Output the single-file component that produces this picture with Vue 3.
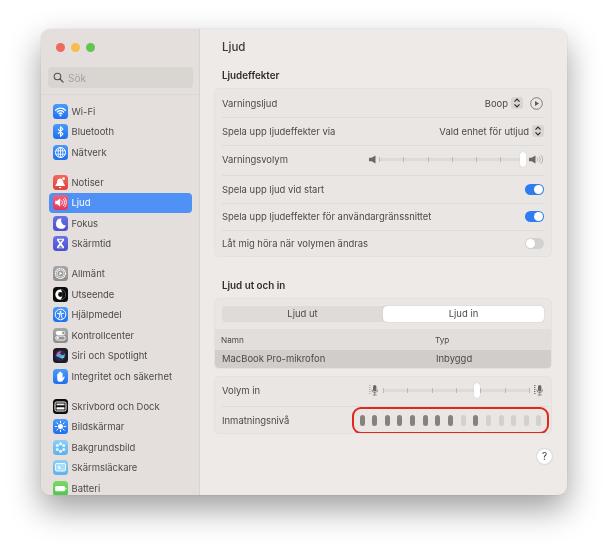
<script setup>
const icons = {
  wifi: '<path d="M2.600 6.200a7 7 0 0 1 9.800 0M4.400 8a4.500 4.500 0 0 1 6.200 0M6 9.700a2.200 2.200 0 0 1 3 0" fill="none" stroke="#fff" stroke-width="1.300" stroke-linecap="round"/><circle cx="7.500" cy="11.400" r="1" fill="#fff"/>',
  bt: '<path d="M4.900 5.200l5 4.700-2.400 2.400V2.700l2.400 2.400-5 4.700" fill="none" stroke="#fff" stroke-width="1.100" stroke-linejoin="round"/>',
  globe: '<circle cx="7.500" cy="7.500" r="5" fill="none" stroke="#fff" stroke-width="1"/><ellipse cx="7.500" cy="7.500" rx="2.300" ry="5" fill="none" stroke="#fff" stroke-width=".8"/><path d="M2.700 5.800h9.600M2.700 9.200h9.600M7.500 2.500v10" stroke="#fff" stroke-width=".8"/>',
  bell: '<path d="M7.200 3.400c-2.100 0-3.100 1.500-3.100 3.300 0 1.800-1 2.700-1.600 3.400v.8h9.400v-.8c-.6-.7-1.600-1.600-1.600-3.400 0-1.800-1-3.300-3.100-3.300z" fill="#fff"/><path d="M6 12a1.200 1.200 0 0 0 2.400 0z" fill="#fff"/><circle cx="10.600" cy="3.700" r="1.900" fill="#e0423c"/><circle cx="10.600" cy="3.700" r="1.400" fill="#fff"/>',
  sound: '<path d="M2.200 5.800h2l3-2.600v8.600l-3-2.600h-2z" fill="#fff"/><path d="M8.800 5.600a2.600 2.600 0 0 1 0 3.800M10.300 4.200a4.600 4.600 0 0 1 0 6.600M11.700 3a6.400 6.400 0 0 1 0 9" fill="none" stroke="#fff" stroke-width=".9" stroke-linecap="round"/>',
  moon: '<path d="M8.400 2.600A5.100 5.100 0 1 0 12.900 9.400 5 5 0 0 1 8.400 2.600z" fill="#fff"/>',
  hourglass: '<path d="M4 2.700h7v1c0 1.700-2.200 2.700-2.200 3.800s2.200 2.100 2.200 3.800v1H4v-1c0-1.700 2.200-2.700 2.200-3.800S4 5.400 4 3.700z" fill="#fff"/><path d="M5.400 3.800h4.200L7.500 6.300zM5.200 11.800h4.600L7.500 9.400z" fill="#6a72d8"/>',
  gear: '<circle cx="7.500" cy="7.500" r="5" fill="none" stroke="#fff" stroke-width="1.200" stroke-dasharray="1.600 .5"/><circle cx="7.500" cy="7.500" r="3.500" fill="none" stroke="#fff" stroke-width=".7"/><path d="M6.500 5.700l2.800 1.800-2.800 1.800z" fill="#fff"/>',
  look: '<circle cx="7.500" cy="7.500" r="5.200" fill="#fff"/><path d="M7.500 2.300a5.200 5.200 0 0 1 0 10.400c1.500-1.500 1.900-3.300 1.900-5.200S9 3.800 7.500 2.300z" fill="#111"/><circle cx="7.500" cy="7.500" r="2.400" fill="#111"/>',
  access: '<circle cx="7.500" cy="7.500" r="5.300" fill="none" stroke="#fff" stroke-width="1"/><circle cx="7.500" cy="4.900" r="1" fill="#fff"/><path d="M4.500 6.300l2.200.5v2l-1 2.700M10.500 6.300l-2.200.5v2l1 2.700M6.700 6.800h1.600" fill="none" stroke="#fff" stroke-width="1" stroke-linecap="round"/>',
  control: '<rect x="2.700" y="2.900" width="9.600" height="4" rx="2" fill="#fff"/><circle cx="10.300" cy="4.900" r="1.300" fill="#999"/><rect x="2.700" y="8.100" width="9.600" height="4" rx="2" fill="none" stroke="#fff" stroke-width=".9"/><circle cx="4.800" cy="10.100" r="1.100" fill="#fff"/>',
  siri: '<circle cx="7.500" cy="7.500" r="5.500" fill="#2b2c46"/><path d="M3 7.500c1.500-3 3-3.500 4.500-1.600 1.300 1.600 3 1.400 4.500-.5-.2 4.700-2.600 5.700-4.500 4.600C6 9 4.600 9.200 3 7.500z" fill="#5ea5e8"/><path d="M3.600 6c1-2.500 3.400-3.300 5-2.500C7 5 5.800 7.500 3.600 6z" fill="#e0559a"/><path d="M8 9.300c1.300-1 3-1 3.600-.7-.8 1.700-2.500 2.500-3.600.7z" fill="#7fdcc0"/>',
  hand: '<path d="M4.200 8.700V5.300a.7.700 0 0 1 1.300 0v2.300-3.800a.7.700 0 0 1 1.400 0v3.500V3.200a.7.700 0 0 1 1.400 0v4.300-3.300a.7.700 0 0 1 1.300 0v5l.9-1.300c.5-.7 1.500-.1 1.100.6l-1.600 3.100c-.5.800-1.200 1.200-2.300 1.200H7c-1.700 0-2.800-1.100-2.800-2.600z" fill="#fff"/>',
  dock: '<rect x="2" y="3" width="11" height="9" rx="1.500" fill="none" stroke="#fff" stroke-width="1"/><rect x="3.500" y="4.500" width="8" height="1.800" fill="#e8e8e8"/><rect x="3.500" y="8.300" width="8" height="2.300" rx=".5" fill="#fff"/>',
  display: '<circle cx="7.500" cy="7.500" r="2.500" fill="#fff"/><path d="M7.500 2.300v1.600M7.500 11.100v1.600M2.300 7.500h1.600M11.100 7.500h1.600M3.800 3.800l1.100 1.100M10.100 10.100l1.100 1.100M3.800 11.200l1.100-1.100M10.100 4.900l1.100-1.100" stroke="#fff" stroke-width="1" stroke-linecap="round"/>',
  flower: '<g fill="#e8f6ff"><circle cx="7.500" cy="3.800" r="1.500"/><circle cx="7.500" cy="11.200" r="1.500"/><circle cx="4.300" cy="5.600" r="1.500"/><circle cx="10.700" cy="5.600" r="1.500"/><circle cx="4.300" cy="9.400" r="1.500"/><circle cx="10.700" cy="9.400" r="1.500"/></g><circle cx="7.500" cy="7.500" r="1.500" fill="#6dbcf0"/>',
  saver: '<rect x="2.500" y="3.500" width="10" height="7.500" rx="1" fill="#a9dcf7" stroke="#fff" stroke-width=".9"/><path d="M6.800 5.400a1.800 1.800 0 1 0 1.600 2.700 1.700 1.700 0 0 1-1.600-2.700z" fill="#fff"/><circle cx="9.800" cy="5.700" r=".4" fill="#fff"/>',
  battery: '<rect x="2.200" y="5" width="9.800" height="5.200" rx="1.200" fill="#fff"/><rect x="12.400" y="6.500" width="1" height="2.200" rx=".5" fill="#fff"/>'
}

const groups = [
  [
    { label: 'Wi-Fi', icon: 'wifi', tone: 'blue' },
    { label: 'Bluetooth', icon: 'bt', tone: 'blue' },
    { label: 'Nätverk', icon: 'globe', tone: 'blue' }
  ],
  [
    { label: 'Notiser', icon: 'bell', tone: 'red' },
    { label: 'Ljud', icon: 'sound', tone: 'pink', active: true },
    { label: 'Fokus', icon: 'moon', tone: 'indigo' },
    { label: 'Skärmtid', icon: 'hourglass', tone: 'indigo' }
  ],
  [
    { label: 'Allmänt', icon: 'gear', tone: 'gray' },
    { label: 'Utseende', icon: 'look', tone: 'black' },
    { label: 'Hjälpmedel', icon: 'access', tone: 'blue' },
    { label: 'Kontrollcenter', icon: 'control', tone: 'gray' },
    { label: 'Siri och Spotlight', icon: 'siri', tone: 'dark' },
    { label: 'Integritet och säkerhet', icon: 'hand', tone: 'blue' }
  ],
  [
    { label: 'Skrivbord och Dock', icon: 'dock', tone: 'black' },
    { label: 'Bildskärmar', icon: 'display', tone: 'blue' },
    { label: 'Bakgrundsbild', icon: 'flower', tone: 'sky' },
    { label: 'Skärmsläckare', icon: 'saver', tone: 'sky' },
    { label: 'Batteri', icon: 'battery', tone: 'green' }
  ]
]

const levels = [1, 1, 1, 1, 1, 1, 1, 1, 0, 1, 0, 0, 0, 0, 0]
</script>

<template>
  <div class="page">
    <div class="window">
      <aside class="sidebar">
        <div class="lights">
          <span class="light l-red"></span>
          <span class="light l-yellow"></span>
          <span class="light l-green"></span>
        </div>
        <div class="search">
          <svg width="11" height="11" viewBox="0 0 11 11"><circle cx="4.500" cy="4.500" r="3.300" fill="none" stroke="#55524f" stroke-width="1.100"/><path d="M7 7l3 3" stroke="#55524f" stroke-width="1.300" stroke-linecap="round"/></svg>
          <span>Sök</span>
        </div>
        <div class="side-rule"></div>
        <nav class="nav">
          <div v-for="(group, g) in groups" :key="g" class="group">
            <div v-for="item in group" :key="item.label" class="item" :class="{ active: item.active }">
              <svg class="app-icon" :class="item.tone" viewBox="0 0 15 15" v-html="icons[item.icon]"></svg>
              <span>{{ item.label }}</span>
            </div>
          </div>
        </nav>
      </aside>

      <main class="main">
        <h1 class="title">Ljud</h1>

        <h2 class="heading">Ljudeffekter</h2>
        <section class="card">
          <div class="row r1">
            <span>Varningsljud</span>
            <div class="controls">
              <span>Boop</span>
              <span class="stepper"><svg width="8" height="10" viewBox="0 0 7 10"><path d="M1 3.700l2.500-2.500L6 3.700M1 6.300l2.500 2.500L6 6.300" fill="none" stroke="#2f2d2b" stroke-width="1.200"/></svg></span>
              <svg class="play" width="13" height="13" viewBox="0 0 13 13"><circle cx="6.500" cy="6.500" r="5.800" fill="none" stroke="#77736f" stroke-width=".9"/><path d="M5 4l4 2.500L5 9z" fill="#5f5c59"/></svg>
            </div>
          </div>
          <div class="row r2">
            <span>Spela upp ljudeffekter via</span>
            <div class="controls">
              <span>Vald enhet för utljud</span>
              <span class="stepper"><svg width="8" height="10" viewBox="0 0 7 10"><path d="M1 3.700l2.500-2.500L6 3.700M1 6.300l2.500 2.500L6 6.300" fill="none" stroke="#2f2d2b" stroke-width="1.200"/></svg></span>
            </div>
          </div>
          <div class="row r3">
            <span class="lift">Varningsvolym</span>
            <div class="slider-wrap out lift">
              <svg width="7" height="9" viewBox="0 0 7 9"><path d="M0 2.800h2.600L6.500.5v8L2.600 6.200H0z" fill="#6b6865"/></svg>
              <div class="slider s-out">
                <i v-for="n in 6" :key="n" class="tick"></i>
                <b class="thumb thumb-end"></b>
              </div>
              <svg width="15" height="11" viewBox="0 0 15 11"><path d="M0 3.800h2.600L6.500 1.500v8L2.600 7.200H0z" fill="#6b6865"/><path d="M8 3.800a2.500 2.500 0 0 1 0 3.400M10 2.500a4.500 4.500 0 0 1 0 6M12 1.200a6.500 6.500 0 0 1 0 8.600" fill="none" stroke="#a5a19e" stroke-width=".8"/></svg>
            </div>
          </div>
          <div class="row r2"><span>Spela upp ljud vid start</span><span class="toggle on"></span></div>
          <div class="row r2"><span>Spela upp ljudeffekter för användargränssnittet</span><span class="toggle on"></span></div>
          <div class="row r6"><span>Låt mig höra när volymen ändras</span><span class="toggle"></span></div>
        </section>

        <h2 class="heading second">Ljud ut och in</h2>
        <section class="card device-card">
          <div class="segment">
            <span class="seg">Ljud ut</span>
            <span class="seg seg-on">Ljud in</span>
          </div>
          <div class="table-head"><span class="c1">Namn</span><span>Typ</span></div>
          <div class="table-row"><span class="c1">MacBook Pro-mikrofon</span><span>Inbyggd</span></div>
        </section>

        <section class="card input-card">
          <div class="row volume-row">
            <span>Volym in</span>
            <div class="slider-wrap in">
              <svg width="10" height="12" viewBox="0 0 10 12"><rect x="4" y="1" width="3.400" height="6.400" rx="1.700" fill="#6b6865"/><path d="M2.800 5.600a2.900 2.900 0 0 0 5.800 0M5.700 8.500v2.200M3.800 11h3.800" fill="none" stroke="#6b6865" stroke-width=".8"/><path d="M.8 1v10" stroke="#8e8a87" stroke-width=".9" stroke-dasharray="1 1"/></svg>
              <div class="slider s-in">
                <i v-for="n in 7" :key="n" class="tick"></i>
                <b class="thumb thumb-mid"></b>
              </div>
              <svg width="10" height="12" viewBox="0 0 10 12"><rect x="4" y="1" width="3.400" height="6.400" rx="1.700" fill="#6b6865"/><path d="M2.800 5.600a2.900 2.900 0 0 0 5.800 0M5.700 8.500v2.200M3.800 11h3.800" fill="none" stroke="#6b6865" stroke-width=".8"/><path d="M.8 1v10" stroke="#3c3a38" stroke-width="1" stroke-dasharray="1 1"/></svg>
            </div>
          </div>
          <div class="row meter-row">
            <span>Inmatningsnivå</span>
            <div class="meter">
              <i v-for="(v, i) in levels" :key="i" class="bar" :class="{ lit: v }"></i>
            </div>
          </div>
        </section>

        <div class="help-line"><span class="help">?</span></div>
      </main>
    </div>
  </div>
</template>

<style>
html, body { margin: 0; background: #fff; }
</style>

<style scoped>
.page {
  width: 608px;
  height: 549px;
  box-sizing: border-box;
  padding: 29px 41px 0;
  overflow: hidden;
  font-family: Inter, "Liberation Sans", sans-serif;
  font-size: 9.450px;
  color: #4c4947;
}
.window {
  display: flex;
  width: 526px;
  height: 466px;
  border-radius: 9px;
  overflow: hidden;
  background: #eeeae8;
  box-shadow: 0 14px 32px rgba(0, 0, 0, .38), 0 0 2px rgba(0, 0, 0, .12);
  filter: blur(.3px);
}

/* sidebar */
.sidebar {
  width: 158px;
  flex: none;
  background: #e4dfdc;
  border-right: 1px solid #d8d3d0;
  overflow: hidden;
}
.lights {
  display: flex;
  gap: 5.700px;
  padding: 14px 0 0 15px;
  height: 15px;
}
.light { width: 9.200px; height: 9.200px; border-radius: 50%; }
.l-red { background: #ee6a5f; }
.l-yellow { background: #f5bd4f; }
.l-green { background: #61c454; }
.search {
  display: flex;
  align-items: center;
  gap: 4px;
  height: 21px;
  margin: 9px 6px 0 7px;
  padding-left: 5px;
  border-radius: 4px;
  background: #d9d5d1;
  color: #a5a19e;
  font-size: 10px;
}
.side-rule { height: 1px; background: #dcd7d4; margin-top: 6px; }
.nav { padding-top: 6px; }
.group + .group { margin-top: 9.500px; }
.item {
  display: flex;
  align-items: center;
  gap: 3.500px;
  height: 20.500px;
  box-sizing: border-box;
  margin: 0 7px 0 8px;
  padding-left: 4px;
  border-radius: 4px;
}
.item.active { background: #4f91f5; color: #fff; }
.app-icon { width: 15px; height: 15px; border-radius: 3.500px; flex: none; }
.blue { background: linear-gradient(#4b9bfa, #1f6ff0); }
.red { background: linear-gradient(#f2685f, #e0423c); }
.pink { background: linear-gradient(#f2607a, #e0385a); }
.indigo { background: linear-gradient(#6a72e6, #4a50cc); }
.gray { background: linear-gradient(#a8a8a8, #8c8c8c); }
.black { background: #0c0c0c; }
.dark { background: #1d1d2a; }
.sky { background: linear-gradient(#8dd0f7, #5cb1ec); }
.green { background: linear-gradient(#7ad968, #4fc548); }

/* main */
.main { flex: 1; min-width: 0; padding: 0 15px 0 14px; }
.title {
  margin: 0;
  height: 36px;
  padding-left: 8px;
  font-size: 11.500px;
  font-weight: 500;
  line-height: 37px;
  color: #3a3836;
}
.heading {
  margin: 1px 0 4px;
  padding-left: 8px;
  height: 18px;
  font-size: 9.800px;
  font-weight: 600;
  line-height: 19px;
  color: #2f2d2c;
}
.heading.second { margin-top: 19px; line-height: 20px; }
.card {
  box-sizing: border-box;
  border: 1px solid #e5e1df;
  border-radius: 5px;
  background: #eae6e4;
  overflow: hidden;
}
.row {
  display: flex;
  align-items: center;
  justify-content: space-between;
  box-sizing: border-box;
  margin: 0 7px;
}
.row + .row { border-top: 1px solid #dfdbd9; }
.r1 { height: 28px; }
.r2 { height: 27.500px; }
.r3 { height: 30.500px; }
.r6 { height: 26px; }
.lift { margin-top: -2px; }
.controls { display: flex; align-items: center; }
.stepper {
  display: flex;
  align-items: center;
  justify-content: center;
  width: 12px;
  height: 12px;
  margin-left: 3px;
  border-radius: 3px;
  background: #d9d5d2;
}
.play { margin-left: 7px; margin-right: 1px; }
.toggle {
  position: relative;
  width: 19px;
  height: 11px;
  border-radius: 6px;
  background: #d4d0cd;
}
.toggle.on { background: #2f7cf0; }
.toggle::after {
  content: "";
  position: absolute;
  top: 1px;
  left: 1px;
  width: 9px;
  height: 9px;
  border-radius: 50%;
  background: #fff;
}
.toggle.on::after { left: 9px; }

.slider-wrap { display: flex; align-items: center; }
.slider-wrap.out { gap: 3.500px; }
.slider-wrap.in { gap: 4px; }
.slider {
  position: relative;
  display: flex;
  align-items: center;
  justify-content: space-between;
  height: 3px;
  border-radius: 2px;
  background: #dedad8;
}
.s-out { width: 146.500px; padding-right: 24px; box-sizing: border-box; }
.s-in { width: 147px; }
.tick { width: 1px; height: 5px; background: #bdb9b6; }
.thumb {
  position: absolute;
  top: -6px;
  width: 6px;
  height: 15px;
  border-radius: 3px;
  background: #fff;
  box-shadow: 0 0 1px rgba(0, 0, 0, .25);
}
.thumb-end { right: 0; }
.thumb-mid { left: 91px; }

.device-card { height: 71px; }
.segment {
  display: flex;
  height: 16px;
  margin: 7px;
  border-radius: 4px;
  background: #dfdbd9;
}
.seg { flex: 1; text-align: center; line-height: 16px; }
.seg-on { border-radius: 4px; background: #fff; box-shadow: 0 0 1px rgba(0, 0, 0, .3); }
.table-head, .table-row { display: flex; align-items: center; }
.c1 { width: 214px; }
.table-head { height: 21px; padding-left: 6px; background: #e2dedc; font-size: 8.200px; }
.table-row { box-sizing: border-box; height: 18px; padding: 0 0 1px 7px; background: #d1cdcb; }
.input-card { margin-top: 7px; height: 58px; }
.volume-row { height: 29px; padding-bottom: 3px; }
.meter-row { height: 27px; margin-right: 2px; }
.meter {
  display: flex;
  align-items: center;
  justify-content: space-between;
  box-sizing: border-box;
  width: 197px;
  height: 27px;
  padding: 0 5.500px;
  border: 2px solid #e0281c;
  border-radius: 9px;
}
.bar { width: 5px; height: 11px; border-radius: 2.500px; background: #d4d0ce; }
.bar.lit { background: #868280; }

.help-line { display: flex; justify-content: flex-end; margin-top: 15px; }
.help {
  width: 15px;
  height: 15px;
  border-radius: 50%;
  background: #fff;
  box-shadow: 0 0 2px rgba(0, 0, 0, .25);
  text-align: center;
  font-size: 10px;
  line-height: 15px;
  color: #3a3836;
}
</style>
